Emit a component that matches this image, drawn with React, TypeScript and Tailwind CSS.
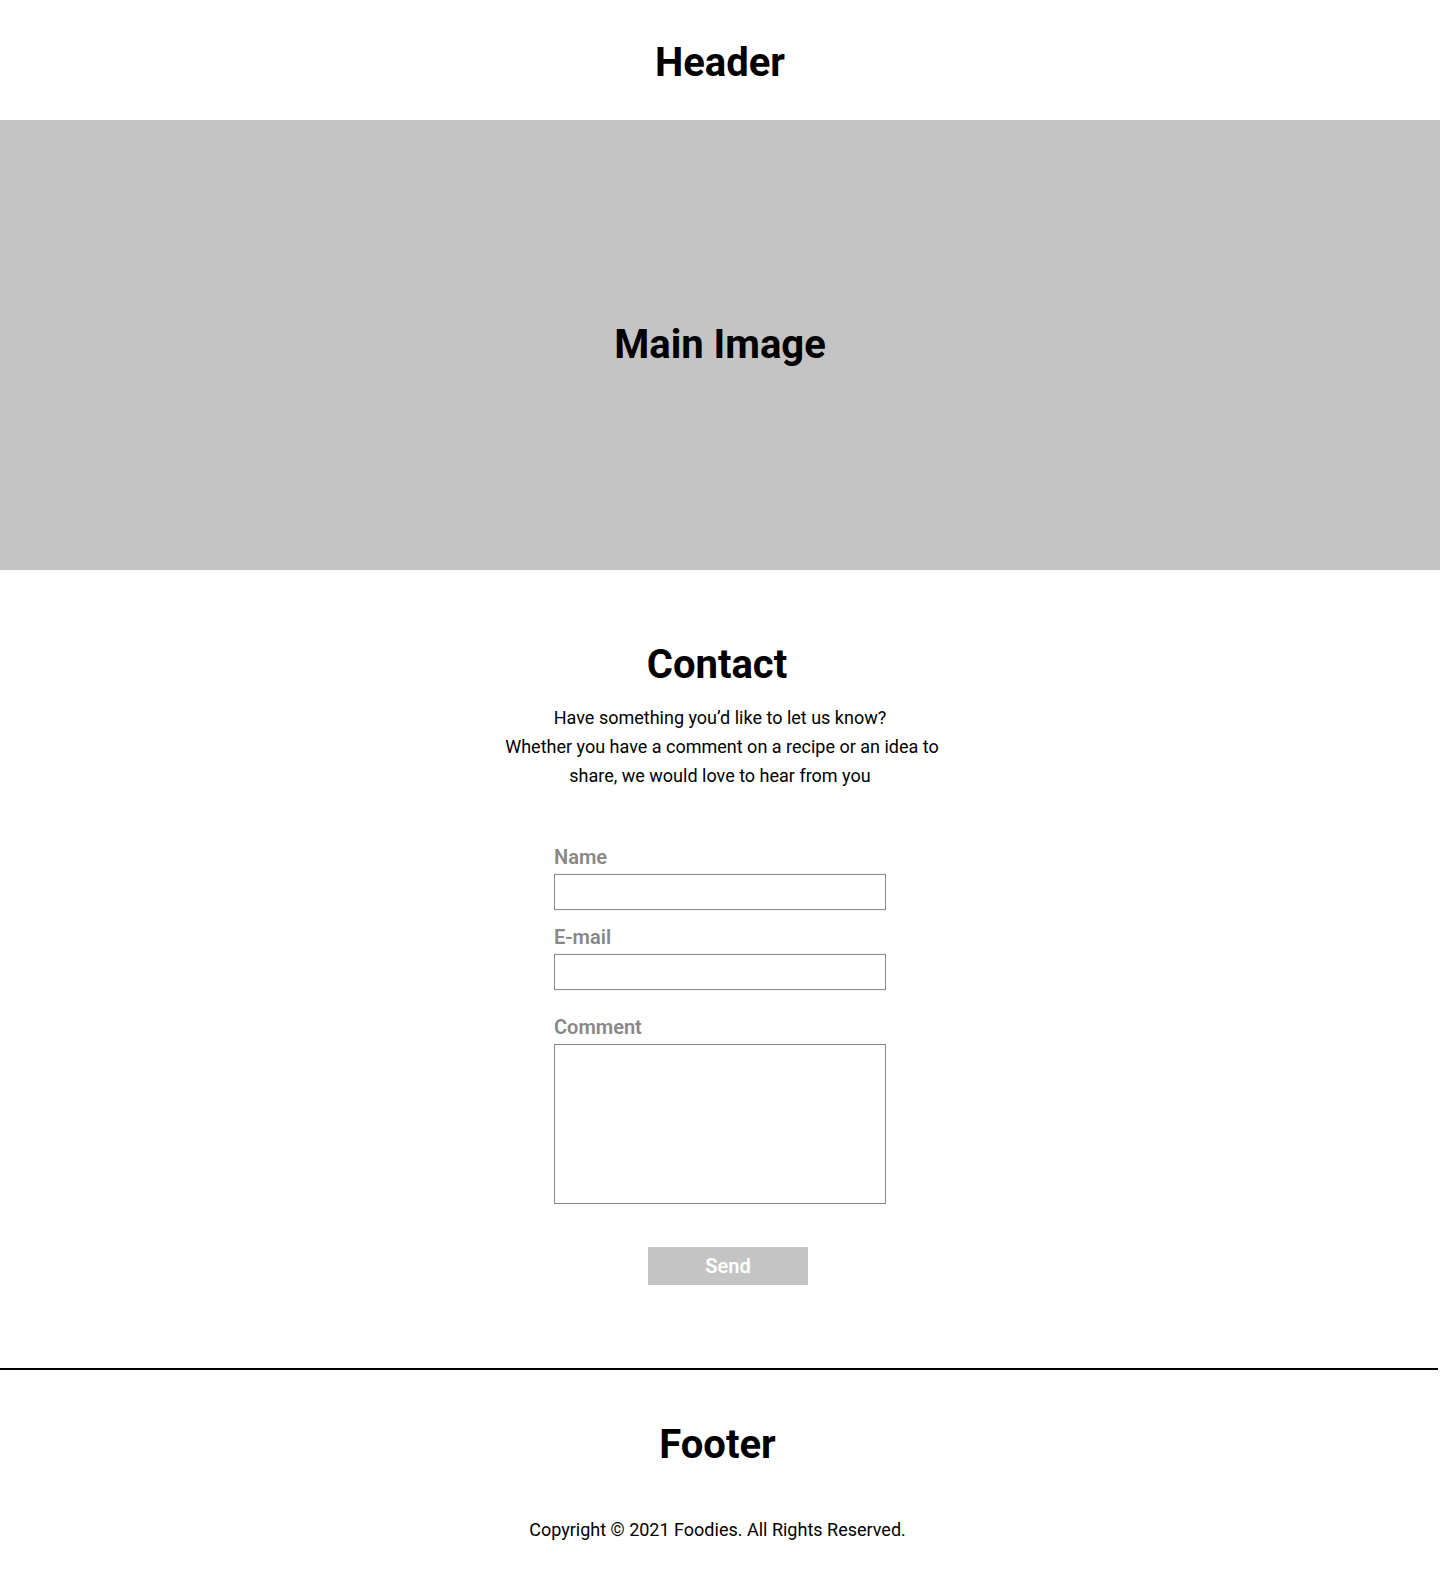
export default function App() {
  return (
    <div className="min-h-screen bg-white text-black font-['Roboto',sans-serif]">
      <header className="h-[120px] pt-[6px] flex items-center justify-center">
        <h1 className="text-[40px] leading-[48px] font-bold">Header</h1>
      </header>

      <section className="h-[450px] bg-[#c4c4c4] flex items-center justify-center">
        <h2 className="text-[40px] leading-[48px] font-bold">Main Image</h2>
      </section>

      <section className="pt-[71px] pb-[83px] flex flex-col items-center">
        <h2 className="pr-[6px] text-[40px] leading-[48px] font-bold">Contact</h2>
        <div className="mt-[14px] text-[18px] leading-[29px] text-center">
          <p>Have something you’d like to let us know?</p>
          <p className="pl-[4px]">Whether you have a comment on a recipe or an idea to</p>
          <p>share, we would love to hear from you</p>
        </div>

        <form className="mt-[55px] w-[332px] flex flex-col" onSubmit={(e) => e.preventDefault()}>
          <label className="text-[20px] leading-6 font-semibold text-[#888888]">Name</label>
          <input type="text" className="mt-[5px] h-9 border border-[#888888] outline-none px-2" />
          <label className="mt-[15px] text-[20px] leading-6 font-semibold text-[#888888]">E-mail</label>
          <input type="email" className="mt-[5px] h-9 border border-[#888888] outline-none px-2" />
          <label className="mt-[25px] text-[20px] leading-6 font-semibold text-[#888888]">Comment</label>
          <textarea className="mt-[5px] h-[160px] border border-[#888888] outline-none p-2 resize-none" />
          <div className="mt-[43px] flex justify-center pl-4">
            <button type="submit" className="w-40 h-[38px] bg-[#c4c4c4] text-white text-[20px] font-semibold">
              Send
            </button>
          </div>
        </form>
      </section>

      <footer className="w-[1438px] border-t-2 border-black pt-[51px] pb-[30px] pr-[3px] flex flex-col items-center">
        <h2 className="text-[40px] leading-[48px] font-bold">Footer</h2>
        <p className="mt-[46px] text-[18px] leading-[29px]">Copyright © 2021 Foodies. All Rights Reserved.</p>
      </footer>
    </div>
  )
}
